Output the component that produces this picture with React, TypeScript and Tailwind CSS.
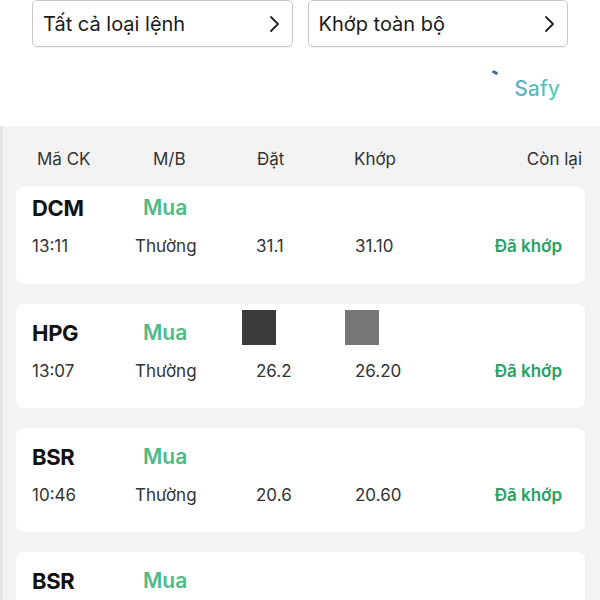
import React from 'react';

const FONT = "font-['Inter','Noto_Sans',sans-serif]";

const orders = [
  { code: 'DCM', time: '13:11', dat: '31.1', khop: '31.10', first: true },
  { code: 'HPG', time: '13:07', dat: '26.2', khop: '26.20', masked: true },
  { code: 'BSR', time: '10:46', dat: '20.6', khop: '20.60' },
  { code: 'BSR', time: '10:40', dat: '20.6', khop: '20.60' },
];

const Chevron = () => (
  <svg width="12" height="18" viewBox="0 0 12 18" fill="none" stroke="#222" strokeWidth="1.8" strokeLinecap="round" strokeLinejoin="round">
    <path d="M3 2l7 7-7 7" />
  </svg>
);

const FilterButton: React.FC<{ label: string }> = ({ label }) => (
  <button className="flex h-[47px] flex-1 items-center justify-between rounded-[5px] border border-[#c9c9c9] bg-white pl-[10px] pr-[12px] text-[20px] text-[#1a1a1a] shadow-[0_1px_1px_rgba(0,0,0,0.05)]">
    <span>{label}</span>
    <Chevron />
  </button>
);

export default function App() {
  return (
    <div className={`h-[600px] w-[600px] overflow-hidden bg-white ${FONT}`}>
      {/* Filters */}
      <div className="flex gap-[15px] pl-[32px] pr-[32px]">
        <FilterButton label="Tất cả loại lệnh" />
        <FilterButton label="Khớp toàn bộ" />
      </div>

      {/* Logo */}
      <div className="flex h-[79px] items-center justify-end pr-[40px] pt-[4px]">
        <div className="relative">
          <span className="absolute left-[-22px] top-[-2px] h-[3px] w-[6px] rotate-[25deg] rounded-full bg-[#3d6f8a]" />
          <span className="bg-gradient-to-r from-[#5aa9c6] to-[#4fd0b0] bg-clip-text text-[21px] font-medium text-transparent">Safy</span>
        </div>
      </div>

      {/* List */}
      <div className="h-full border-l-[3px] border-[#e6e6e6] bg-[#f3f3f3] pl-[13px] pr-[15px]">
        <div className="flex h-[61px] items-center pt-[6px] text-[17px] text-[#333]">
          <div className="w-[119px] pl-[21px]">Mã CK</div>
          <div className="w-[120px] pl-[18px]">M/B</div>
          <div className="w-[99px] pl-[2px]">Đặt</div>
          <div>Khớp</div>
          <div className="ml-auto pr-[3px]">Còn lại</div>
        </div>

        <div className="flex flex-col gap-[20px]">
          {orders.map((o, i) => (
            <div
              key={i}
              className={`relative rounded-[8px] bg-white pl-[16px] pr-[23px] ${o.first ? 'h-[97px] pt-[6px]' : 'h-[104px] pt-[14px]'}`}
            >
              <div className="flex h-[30px] items-center">
                <span className="w-[111px] text-[22px] font-bold tracking-[-0.3px] text-[#111]">{o.code}</span>
                <span className="text-[21px] font-semibold text-[#4cbb86]">Mua</span>
              </div>
              <div className="mt-[12px] flex h-[24px] items-center text-[17px] text-[#333]">
                <span className="w-[103px]">{o.time}</span>
                <span className="w-[121px]">Thường</span>
                <span className="w-[99px]">{o.dat}</span>
                <span>{o.khop}</span>
                <span className="ml-auto text-[17px] font-semibold text-[#27a262]">Đã khớp</span>
              </div>
              {o.masked && (
                <>
                  <div className="absolute left-[226px] top-[6px] h-[35px] w-[34px] bg-[#3b3b3b]" />
                  <div className="absolute left-[329px] top-[6px] h-[35px] w-[34px] bg-[#777]" />
                </>
              )}
            </div>
          ))}
        </div>
      </div>
    </div>
  );
}
